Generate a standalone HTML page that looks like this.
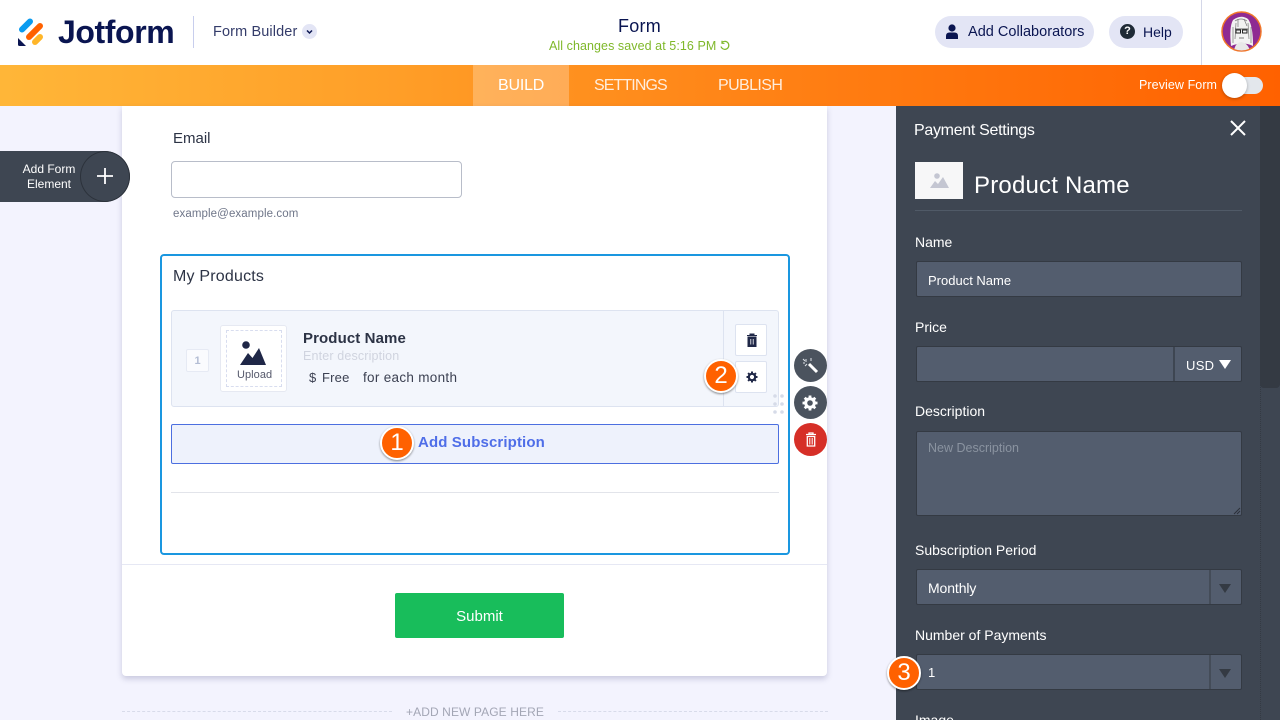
<!DOCTYPE html>
<html style="width:1280px;height:720px;overflow:hidden"><head><meta charset="utf-8"><style>
html,body{margin:0;padding:0}
body{width:1280px;height:720px;overflow:hidden;background:#f3f3fe;font-family:"Liberation Sans",sans-serif}
#p{position:relative;width:1280px;height:720px;overflow:hidden;background:#f3f3fe}
.a,.t{position:absolute;box-sizing:border-box}
.t{white-space:nowrap;line-height:1}
.inp{position:absolute;box-sizing:border-box;background:#535d6e;border:1px solid #343a43;border-radius:2px;left:916px;width:326px}
.lbl{color:#fff;font-size:14px;left:915px}
.num{position:absolute;box-sizing:border-box;width:34px;height:34px;border-radius:50%;background:#ff6100;border:2px solid #fff;box-shadow:0 1px 2px rgba(0,0,0,.45);color:#fff;font-size:24px;line-height:29px;text-align:center}
.tri{position:absolute;width:0;height:0;border-left:6px solid transparent;border-right:6px solid transparent;border-top:9px solid #343a43}
</style></head><body><div id="p">

<!-- header -->
<div class="a" style="left:0;top:0;width:1280px;height:65px;background:#fff"></div>
<svg class="a" style="left:17px;top:17px" width="30" height="30" viewBox="0 0 30 30">
<line x1="5" y1="12.500" x2="13" y2="4.500" stroke="#0a9bf0" stroke-width="6" stroke-linecap="round"/>
<line x1="12" y1="20" x2="23" y2="9" stroke="#ff6100" stroke-width="6" stroke-linecap="round"/>
<line x1="18" y1="25" x2="23" y2="20" stroke="#ffb629" stroke-width="6" stroke-linecap="round"/>
<path d="M1 21L9 29H2.500Q1 29 1 27.500Z" fill="#0a1551"/>
</svg>
<div class="t" style="left:58px;top:16px;font-size:32px;font-weight:700;color:#0a1551;letter-spacing:-.4px">Jotform</div>
<div class="a" style="left:193px;top:16px;width:1px;height:32px;background:#c8ceed"></div>
<div class="t" style="left:213px;top:25px;font-size:14.500px;color:#343c6a;letter-spacing:.12px">Form Builder</div>
<div class="a" style="left:302px;top:24px;width:15px;height:15px;border-radius:50%;background:#e3e5f5"></div>
<svg class="a" style="left:302px;top:24px" width="15" height="15"><path d="M5 6.500L7.500 9L10 6.500" fill="none" stroke="#0a1551" stroke-width="1.500"/></svg>

<div class="t" style="left:618px;top:17px;font-size:18px;color:#0a1551;letter-spacing:.25px">Form</div>
<div class="t" style="left:549px;top:40px;font-size:12.500px;color:#7fb82a;letter-spacing:.07px">All changes saved at 5:16 PM</div>
<svg class="a" style="left:719px;top:40px" width="12" height="12" viewBox="0 0 12 12"><path d="M3 2.500A4 4 0 1 1 2 6.500M3 .8V3.300H5.500" fill="none" stroke="#7fb82a" stroke-width="1.200"/></svg>

<div class="a" style="left:935px;top:16px;width:159px;height:32px;border-radius:16px;background:#e3e5f5"></div>
<svg class="a" style="left:945px;top:24px" width="14" height="16" viewBox="0 0 14 16"><circle cx="7" cy="4" r="3.600" fill="#0a1551"/><path d="M1 15V12Q1 8.500 4.500 8.500H9.500Q13 8.500 13 12V15Z" fill="#0a1551"/></svg>
<div class="t" style="left:968px;top:25px;font-size:14.500px;color:#0a1551;letter-spacing:.02px">Add Collaborators</div>
<div class="a" style="left:1109px;top:16px;width:74px;height:32px;border-radius:16px;background:#e3e5f5"></div>
<div class="a" style="left:1120px;top:24px;width:15px;height:15px;border-radius:50%;background:#1f2a36;color:#fff;font-size:11px;font-weight:700;line-height:15px;text-align:center">?</div>
<div class="t" style="left:1143px;top:25px;font-size:14px;color:#0a1551">Help</div>
<div class="a" style="left:1201px;top:0;width:1px;height:65px;background:#d4d7e8"></div>
<svg class="a" style="left:1221px;top:11px" width="41" height="41" viewBox="0 0 41 41">
<defs><clipPath id="c"><circle cx="20.500" cy="20.500" r="19"/></clipPath></defs>
<circle cx="20.500" cy="20.500" r="19.500" fill="#8e2a92" stroke="#f0762a" stroke-width="1.500"/>
<g clip-path="url(#c)">
<path d="M10 35Q8 16 12 9Q20 3 27 8Q32 14 32 35Q22 30 10 35Z" fill="#f2f2f2"/>
<path d="M13 40Q14 32 20 31Q27 32 29 40Z" fill="#e8e8e8"/>
<path d="M14 10Q20 6 26 10M12 16V32M30 16V32M17 8V16M23 8L26 15M15 12L14 28M27 12L28 28" stroke="#777" stroke-width=".7" fill="none"/>
<path d="M15 19H19.500V22H15ZM21.500 19H26V22H21.500Z" fill="none" stroke="#222" stroke-width="1"/>
<path d="M14 18L27 18" stroke="#333" stroke-width=".8"/>
<path d="M18 27H23" stroke="#555" stroke-width=".8"/>
</g>
</svg>

<!-- toolbar -->
<div class="a" style="left:0;top:65px;width:1280px;height:41px;background:linear-gradient(90deg,#ffb638 0%,#ff9f28 30%,#ff7d12 65%,#ff6100 100%)"></div>
<div class="a" style="left:473px;top:65px;width:96px;height:41px;background:rgba(255,255,255,.25)"></div>
<div class="t" style="left:498px;top:78px;font-size:16px;color:#fff;letter-spacing:-.2px">BUILD</div>
<div class="t" style="left:594px;top:78px;font-size:16px;color:#fff;opacity:.85;letter-spacing:-.9px">SETTINGS</div>
<div class="t" style="left:718px;top:78px;font-size:16px;color:#fff;opacity:.85;letter-spacing:-.6px">PUBLISH</div>
<div class="t" style="left:1139px;top:79px;font-size:12.500px;color:#fff;letter-spacing:.08px">Preview Form</div>
<div class="a" style="left:1224px;top:77px;width:39px;height:17px;border-radius:9px;background:#e3e7ec"></div>
<div class="a" style="left:1222px;top:73px;width:25px;height:25px;border-radius:50%;background:#fff;box-shadow:0 1px 3px rgba(0,0,0,.3)"></div>

<!-- form card -->
<div class="a" style="left:122px;top:106px;width:705px;height:570px;background:#fff;border-radius:0 0 4px 4px;box-shadow:0 3px 6px rgba(80,80,130,.25)"></div>
<div class="t" style="left:173px;top:131px;font-size:15px;color:#2c3345">Email</div>
<div class="a" style="left:171px;top:161px;width:291px;height:37px;background:#fff;border:1px solid #b8bdc9;border-radius:4px"></div>
<div class="t" style="left:173px;top:209px;font-size:11.500px;color:#6f7689;letter-spacing:.1px">example@example.com</div>

<div class="a" style="left:160px;top:254px;width:630px;height:301px;border:2px solid #1a97e0;border-radius:4px;background:#fff"></div>
<div class="t" style="left:173px;top:268.500px;font-size:16px;color:#2c3345;letter-spacing:.2px">My Products</div>
<div class="a" style="left:171px;top:310px;width:608px;height:97px;background:#f3f6fc;border:1px solid #dde3f0;border-radius:3px"></div>
<div class="a" style="left:723px;top:311px;width:1px;height:95px;background:#dde3f0"></div>
<div class="a" style="left:186px;top:349px;width:23px;height:23px;background:#fafbfe;border:1px solid #e6eaf4;border-radius:2px;color:#b3bdd4;font-size:11px;font-weight:700;line-height:22px;text-align:center">1</div>
<div class="a" style="left:220px;top:325px;width:67px;height:67px;background:#fff;border:1px solid #e6e9f2;border-radius:3px"></div>
<div class="a" style="left:226px;top:330px;width:56px;height:57px;border:1px dashed #d8ddef"></div>
<svg class="a" style="left:238px;top:340px" width="30" height="26" viewBox="0 0 30 26"><circle cx="8" cy="5" r="3.800" fill="#1f2747"/><path d="M2 25L10 13L14.500 18L21 8L28 25Z" fill="#1f2747"/></svg>
<div class="t" style="left:237px;top:370px;font-size:11px;color:#55586b;letter-spacing:.05px">Upload</div>
<div class="t" style="left:303px;top:331px;font-size:15px;font-weight:700;color:#2c3345;letter-spacing:.1px">Product Name</div>
<div class="t" style="left:303px;top:349.500px;font-size:12.500px;color:#d0d4df;letter-spacing:.15px">Enter description</div>
<div class="t" style="left:309px;top:371px;font-size:13px;color:#3c4152;letter-spacing:.2px">$</div>
<div class="t" style="left:322px;top:371px;font-size:13px;color:#3c4152;letter-spacing:.2px">Free</div>
<div class="t" style="left:363px;top:371px;font-size:13.500px;color:#3c4152;letter-spacing:.3px">for each month</div>

<div class="a" style="left:735px;top:324px;width:32px;height:32px;background:#fff;border:1px solid #dde3f0;border-radius:2px"></div>
<svg class="a" style="left:746px;top:333px" width="12" height="14" viewBox="0 0 12 14"><path d="M1 2.500H11M4 2.500V1H8V2.500M2 4H10V13.500H2Z" fill="#1f2747" stroke="#1f2747"/><path d="M4.800 6V11.500M7.200 6V11.500" stroke="#fff" stroke-width=".8"/></svg>
<div class="a" style="left:735px;top:361px;width:32px;height:32px;background:#fff;border:1px solid #dde3f0;border-radius:2px"></div>
<svg class="a" style="left:746px;top:371px" width="12" height="12" viewBox="0 0 12 12"><circle cx="6" cy="6" r="3.200" fill="none" stroke="#1f2747" stroke-width="2.200"/><path d="M6 .5V2.500M6 9.500V11.500M.5 6H2.500M9.500 6H11.500M2.100 2.100L3.500 3.500M8.500 8.500L9.900 9.900M2.100 9.900L3.500 8.500M8.500 3.500L9.900 2.100" stroke="#1f2747" stroke-width="2"/></svg>

<svg class="a" style="left:771px;top:393px" width="16" height="22"><g fill="#d6dbe8"><circle cx="4" cy="3" r="1.800"/><circle cx="11" cy="3" r="1.800"/><circle cx="4" cy="11" r="1.800"/><circle cx="11" cy="11" r="1.800"/><circle cx="4" cy="19" r="1.800"/><circle cx="11" cy="19" r="1.800"/></g></svg>

<div class="a" style="left:794px;top:349px;width:33px;height:33px;border-radius:50%;background:#4b535e"></div>
<svg class="a" style="left:794px;top:349px" width="33" height="33" viewBox="0 0 33 33"><path d="M15 15L23 23" stroke="#fff" stroke-width="3"/><path d="M12 10V13M9 14H11M11 17L13 15M17 9V12M9 10L11 12" stroke="#dfe3e8" stroke-width="1"/></svg>
<div class="a" style="left:794px;top:386px;width:33px;height:33px;border-radius:50%;background:#4b535e"></div>
<svg class="a" style="left:802px;top:394.500px" width="16" height="16" viewBox="0 0 16 16"><circle cx="8" cy="8" r="4.300" fill="none" stroke="#fff" stroke-width="3"/><path d="M8 .5V3.500M8 12.500V15.500M.5 8H3.500M12.500 8H15.500M2.700 2.700L4.800 4.800M11.200 11.200L13.300 13.300M2.700 13.300L4.800 11.200M11.200 4.800L13.300 2.700" stroke="#fff" stroke-width="2.800"/></svg>
<div class="a" style="left:794px;top:423px;width:33px;height:33px;border-radius:50%;background:#d62f27"></div>
<svg class="a" style="left:805px;top:432px" width="12" height="15" viewBox="0 0 12 15"><path d="M1 2.500H11M4 2.500V1H8V2.500M2.300 4.500H9.700V14H2.300Z" fill="none" stroke="#fff" stroke-width="1.300"/><path d="M4.800 6V12.500M7.200 6V12.500" stroke="#fff" stroke-width="1"/></svg>

<div class="a" style="left:171px;top:424px;width:608px;height:40px;background:#eef2fc;border:1px solid #4c6fe0;border-radius:2px"></div>
<div class="t" style="left:418px;top:435px;font-size:15px;font-weight:700;color:#4f6ee8;letter-spacing:.12px">Add Subscription</div>
<div class="a" style="left:171px;top:492px;width:608px;height:1px;background:#e2e4ea"></div>
<div class="a" style="left:122px;top:564px;width:705px;height:1px;background:#e6e8f4"></div>
<div class="a" style="left:395px;top:593px;width:169px;height:45px;background:#18bd5b;border-radius:2px"></div>
<div class="t" style="left:395px;top:609px;width:169px;text-align:center;font-size:15px;color:#fff">Submit</div>

<div class="a" style="left:122px;top:711px;width:270px;border-top:1px dashed #d8dbea"></div>
<div class="t" style="left:406px;top:706px;font-size:12px;color:#a3a6b5;letter-spacing:.1px">+ADD NEW PAGE HERE</div>
<div class="a" style="left:558px;top:711px;width:270px;border-top:1px dashed #d8dbea"></div>

<!-- add form element -->
<div class="a" style="left:0;top:151px;width:130px;height:51px;background:#3e4652;border-radius:0 26px 26px 0"></div>
<div class="a" style="left:80px;top:151px;width:50px;height:51px;border-radius:50%;border:1px solid #2c323b"></div>
<div class="t" style="left:11px;top:162px;width:76px;text-align:center;font-size:12px;line-height:15px;color:#fff;white-space:normal">Add Form Element</div>
<svg class="a" style="left:96px;top:167px" width="18" height="18"><path d="M9 1V17M1 9H17" stroke="#fff" stroke-width="1.800"/></svg>

<!-- right panel -->
<div class="a" style="left:896px;top:106px;width:384px;height:614px;background:#3e4652"></div>
<div class="a" style="left:1260px;top:106px;width:20px;height:614px;border-left:1px dotted #343a43"></div>
<div class="a" style="left:1260px;top:106px;width:20px;height:282px;background:#343a43;border-radius:0 0 4px 4px"></div>
<div class="t" style="left:914px;top:123px;font-size:16px;color:#fff;letter-spacing:-.3px">Payment Settings</div>
<svg class="a" style="left:1229px;top:119px" width="18" height="18"><path d="M2 2L16 16M16 2L2 16" stroke="#fff" stroke-width="2"/></svg>
<div class="a" style="left:915px;top:162px;width:48px;height:37px;background:#f7f7f8"></div>
<svg class="a" style="left:930px;top:172px" width="19" height="16" viewBox="0 0 19 16"><circle cx="7" cy="4" r="2.800" fill="#c4c6d2"/><path d="M0 16L5 9L8 12L13 5L19 16Z" fill="#c4c6d2"/></svg>
<div class="t" style="left:974px;top:174px;font-size:24px;color:#fff;letter-spacing:.2px">Product Name</div>
<div class="a" style="left:915px;top:210px;width:327px;height:1px;background:#505a67"></div>

<div class="t lbl" style="top:235px">Name</div>
<div class="inp" style="top:261px;height:36px"></div>
<div class="t" style="left:928px;top:274px;font-size:13px;color:#fff">Product Name</div>

<div class="t lbl" style="top:320px">Price</div>
<div class="inp" style="top:346px;height:36px"></div>
<div class="a" style="left:1173px;top:347px;width:2px;height:34px;background:#3e4652"></div>
<div class="t" style="left:1186px;top:358.500px;font-size:13px;color:#fff;letter-spacing:.3px">USD</div>
<div class="tri" style="left:1219px;top:360px;border-top-color:#fff"></div>

<div class="t lbl" style="top:404px">Description</div>
<div class="inp" style="top:431px;height:85px"></div>
<div class="t" style="left:928px;top:442px;font-size:12.500px;color:#8a93a0">New Description</div>
<svg class="a" style="left:1233px;top:507px" width="8" height="8"><path d="M7 1L1 7M7 4L4 7" stroke="#2b3038" stroke-width="1"/></svg>

<div class="t lbl" style="top:543px">Subscription Period</div>
<div class="inp" style="top:569px;height:36px"></div>
<div class="a" style="left:1209px;top:570px;width:2px;height:34px;background:#444c58"></div>
<div class="t" style="left:928px;top:581px;font-size:14px;color:#fff;letter-spacing:-.1px">Monthly</div>
<div class="tri" style="left:1219px;top:584px"></div>

<div class="t lbl" style="top:628px">Number of Payments</div>
<div class="inp" style="top:654px;height:36px"></div>
<div class="a" style="left:1209px;top:655px;width:2px;height:34px;background:#444c58"></div>
<div class="t" style="left:928px;top:666px;font-size:13px;color:#fff">1</div>
<div class="tri" style="left:1219px;top:669px"></div>

<div class="t lbl" style="top:713px">Image</div>

<!-- numbered badges -->
<div class="num" style="left:380px;top:426px">1</div>
<div class="num" style="left:704px;top:359px">2</div>
<div class="num" style="left:887px;top:656px">3</div>
</div></body></html>
